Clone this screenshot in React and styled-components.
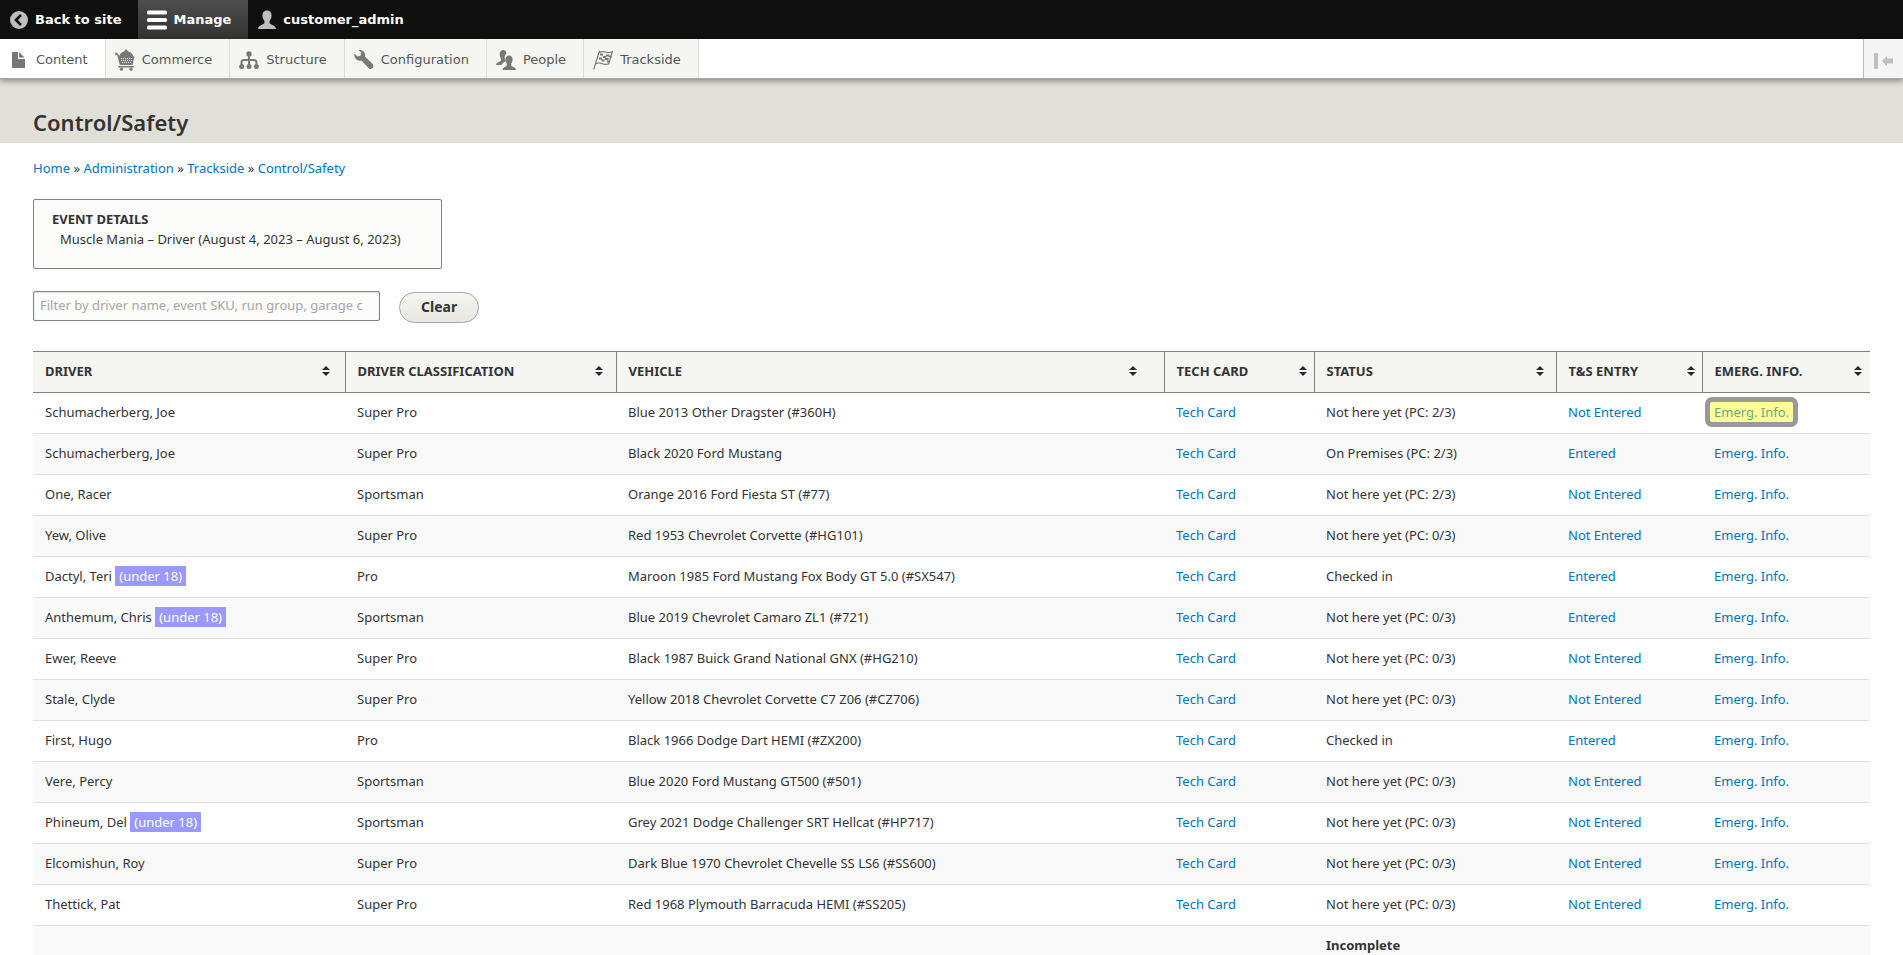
import React from 'react'
import styled, { createGlobalStyle } from 'styled-components'

const GlobalStyle = createGlobalStyle`
	body {
		margin: 0;
		background: #fff;
		color: #333;
		font-family: "Lucida Grande", "Lucida Sans Unicode", "Noto Sans", sans-serif;
		font-size: 13px;
		line-height: 20px;
	}
	a {
		color: #0074bd;
		text-decoration: none;
	}
	main a:hover {
		text-decoration: underline;
	}
`

const Bar = styled.nav`
	display: flex;
	height: 39px;
	background: #0f0f0f;
`
const BarTab = styled.a`
	display: flex;
	align-items: center;
	gap: 6px;
	padding: 0 17px 0 9px;
	color: #fff;
	font-family: Verdana, "DejaVu Sans", sans-serif;
	font-weight: bold;
	background: ${props => props.$active ? 'linear-gradient(#4d4d4d, #333)' : 'none'};
`
const Tray = styled.nav`
	position: relative;
	display: flex;
	height: 39px;
	background: #fff;
	box-shadow: 0 1px 0 #a6a6a4, 0 3px 6px rgba(0, 0, 0, 0.4);
	font-family: Verdana, "DejaVu Sans", sans-serif;
`
const TrayTab = styled.a`
	display: flex;
	align-items: center;
	gap: 7px;
	padding: 2px 17px 0 9px;
	border-right: 1px solid #ddd;
	background: ${props => props.$active ? '#fff' : '#f5f5f2'};
	&& {
		color: #565656;
	}
`
const Toggle = styled.button`
	width: 40px;
	margin-left: auto;
	padding: 8px 0 0;
	border: 0;
	border-left: 1px solid #bfbfbf;
	background: #f5f5f5;
`
const PageHeader = styled.header`
	padding: 30px 33px 7px;
	background: #e0e0d8;
`
const Title = styled.h1`
	margin: 0;
	font-size: 22px;
	font-weight: 600;
	line-height: 28px;
`
const Page = styled.main`
	padding: 15px 33px 0;
`
const Breadcrumb = styled.nav`
	margin-bottom: 21px;
`
const EventBox = styled.section`
	box-sizing: border-box;
	width: fit-content;
	min-width: 409px;
	padding: 9px 18px 19px;
	border: 1px solid #808080;
	border-radius: 2px;
	background: #fcfcfa;
`
const EventTitle = styled.h2`
	margin: 0;
	font-size: 13px;
	line-height: 20px;
	text-transform: uppercase;
`
const EventText = styled.div`
	padding-left: 8px;
`
const Filters = styled.form`
	display: flex;
	align-items: flex-start;
	gap: 19px;
	margin: 22px 0 28px;
`
const FilterInput = styled.input`
	box-sizing: border-box;
	width: 347px;
	height: 30px;
	padding: 2px 6px 4px;
	border: 1px solid #808080;
	border-radius: 2px;
	background: #fcfcfa;
	box-shadow: inset 0 1px 2px rgba(0, 0, 0, 0.125);
	font: inherit;
	&::placeholder {
		color: #a6a6a6;
	}
`
const ClearButton = styled.button`
	height: 31px;
	margin-top: 1px;
	padding: 0 21px 2px;
	border: 1px solid #a6a6a6;
	border-radius: 20px;
	background: linear-gradient(#f6f6f3, #e7e7df);
	color: #333;
	font-family: inherit;
	font-size: 14px;
	font-weight: 700;
`
const Table = styled.table`
	width: 100%;
	border-collapse: collapse;
	table-layout: fixed;
`
const Col = styled.col`
	width: ${props => props.$width};
`
const Th = styled.th`
	height: 38px;
	padding: 0 0 2px 12px;
	border: 1px solid #808080;
	border-width: 1px 0 1px 1px;
	background: #f5f5f2;
	text-align: left;
	text-transform: uppercase;
	&:first-child {
		border-left: 0;
	}
`
const SortLabel = styled.span`
	display: flex;
	align-items: center;
	justify-content: space-between;
	padding-right: 5%;
	white-space: nowrap;
`
const Row = styled.tr`
	border-bottom: 1px solid #e0e0e0;
	&:nth-child(even) {
		background: #f9f9f9;
	}
`
const Td = styled.td`
	height: 38px;
	padding: 0 12px 2px;
	white-space: nowrap;
`
const Minor = styled.span`
	display: inline-block;
	padding: 0 4px;
	background: #9999ff;
	color: #fff;
`
const Focused = styled.a`
	display: inline-block;
	margin: 0 -4px;
	padding: 0 4px;
	border-radius: 2px;
	background: #ffff99;
	&& {
		color: #66ac7b;
	}
	outline: 5px solid #999;
`

const BackIcon = () => (
	<svg width="20" height="20" viewBox="0 0 20 20">
		<circle cx="10" cy="10" r="9" fill="#bebebe" />
		<path d="M12 5l-5 5 5 5" fill="none" stroke="#0f0f0f" strokeWidth="2.6" />
	</svg>
)
const MenuIcon = () => (
	<svg width="20" height="20" viewBox="0 0 20 20" fill="#fff">
		<rect y="0.5" width="20" height="4" rx="1.5" />
		<rect y="8" width="20" height="4" rx="1.5" />
		<rect y="15.5" width="20" height="4" rx="1.5" />
	</svg>
)
const UserIcon = () => (
	<svg width="20" height="20" viewBox="0 0 20 20" fill="#bebebe">
		<path d="M10 .5c3 0 4.600 2 4.600 5 0 2-.7 3.800-2 5.200v2.600c1.200 1.700 6 2 6.400 5.700H1c.4-3.700 5.200-4 6.400-5.700v-2.600c-1.300-1.400-2-3.200-2-5.200 0-3 1.600-5 4.600-5z" />
	</svg>
)
const ContentIcon = () => (
	<svg width="20" height="20" viewBox="0 0 20 20" fill="#787878">
		<path d="M3 2h6v7h7v9H3z" />
		<path d="M10 2v5.500h5.500z" />
	</svg>
)
const CartIcon = () => (
	<svg width="20" height="22" viewBox="0 0 20 22" fill="#787878">
		<path d="M4 8C4.500 5 6.500 3 9 2.500L11 0l2.500 2.500C16 3.500 18 5 18.500 8z" />
		<path d="M1 4.700L3.200 6.500 5.500 15.500" fill="none" stroke="#787878" strokeWidth="1.600" />
		<path d="M3.500 7.500h16l-2 8.500H5.500z" />
		<path d="M6 9.500h12M6 11.500h12M7 13.500h10" stroke="#f5f5f2" strokeWidth="1" strokeDasharray="1 1" />
		<rect x="3" y="17" width="16" height="1.600" rx=".8" />
		<circle cx="1.200" cy="4.800" r="1.200" />
		<circle cx="6.500" cy="20.200" r="1.600" />
		<circle cx="16" cy="20.200" r="1.600" />
	</svg>
)
const StructureIcon = () => (
	<svg width="20" height="20" viewBox="0 0 20 20" fill="#787878">
		<path d="M10 3v14M2.500 16v-3.500q0-2.500 2.500-2.500h10q2.500 0 2.500 2.500V16" fill="none" stroke="#787878" strokeWidth="2" />
		<circle cx="10" cy="4" r="2.700" />
		<circle cx="2.700" cy="16.500" r="2.500" />
		<circle cx="10" cy="16.500" r="2.500" />
		<circle cx="17.300" cy="16.500" r="2.500" />
	</svg>
)
const WrenchIcon = () => (
	<svg width="20" height="20" viewBox="0 0 20 20" fill="#787878">
		<path d="M4.500 0C9 -.5 12 2.800 11 6.500l7.700 7.500c2.200 2.800-1 6.200-3.700 4.400L7.500 10.500C3.500 11.500-.3 8.500.5 3.500L3.500 6.500l3-.7.700-3z" />
	</svg>
)
const PeopleIcon = () => (
	<svg width="20" height="20" viewBox="0 0 20 20" fill="#787878">
		<path d="M7 0c2.300 0 3.500 1.500 3.400 3.500C8.500 5 8 8 9.500 10.500c.3 1.500-3 2-4 4.500H0c.2-3 4.200-3 5-4.500V8.500C3 6 3 0 7 0z" />
		<path d="M13 5.500c4 0 4.500 5 2.200 8.200v1.800c.8 1.500 4.800 1.500 4.800 4.500H6.500c0-3 3.700-3 4.300-4.500v-1.800C8.500 10.500 9 5.500 13 5.500z" />
	</svg>
)
const FlagIcon = () => (
	<svg width="20" height="20" viewBox="0 0 20 20" fill="none" stroke="#787878" strokeWidth="1.200">
		<path d="M.7 19.500L6.500.8M6.500 2.200c4.500-2.500 7 2.200 12.800-.4l-3.600 12c-5.500 2.500-7.500-2.300-12.600-.4" />
		<path d="M7 4.500h3M13 5.500h3M10 7h3M16 6.500h2.500M6 8.500h3M12 9h3.500M8.500 10.500h3M14 11.500h2" strokeWidth="2" />
	</svg>
)
const CollapseIcon = () => (
	<svg width="20" height="16" viewBox="0 0 20 16" fill="#bebebe">
		<rect x="0" y="0" width="4" height="16" rx="1" />
		<path d="M8 8l5-5v2.500h6v5h-6V13z" />
	</svg>
)
const SortIcon = () => (
	<svg width="8" height="10" viewBox="0 0 8 10" fill="#222b2e">
		<path d="M4 0l4 4H0zM0 6h8l-4 4z" />
	</svg>
)

const tabs = [
	{ name: 'Content', icon: ContentIcon },
	{ name: 'Commerce', icon: CartIcon },
	{ name: 'Structure', icon: StructureIcon },
	{ name: 'Configuration', icon: WrenchIcon },
	{ name: 'People', icon: PeopleIcon },
	{ name: 'Trackside', icon: FlagIcon },
]

const columns = [
	{ name: 'Driver', width: '312px' },
	{ name: 'Driver Classification', width: '271px' },
	{ name: 'Vehicle', width: 'auto' },
	{ name: 'Tech Card', width: '150px' },
	{ name: 'Status', width: '242px' },
	{ name: 'T&S Entry', width: '146px' },
	{ name: 'Emerg. Info.', width: '168px' },
]

const drivers = [
	{ name: 'Schumacherberg, Joe', level: 'Super Pro', vehicle: 'Blue 2013 Other Dragster (#360H)', status: 'Not here yet (PC: 2/3)', focused: true },
	{ name: 'Schumacherberg, Joe', level: 'Super Pro', vehicle: 'Black 2020 Ford Mustang', status: 'On Premises (PC: 2/3)', entered: true },
	{ name: 'One, Racer', level: 'Sportsman', vehicle: 'Orange 2016 Ford Fiesta ST (#77)', status: 'Not here yet (PC: 2/3)' },
	{ name: 'Yew, Olive', level: 'Super Pro', vehicle: 'Red 1953 Chevrolet Corvette (#HG101)', status: 'Not here yet (PC: 0/3)' },
	{ name: 'Dactyl, Teri', minor: true, level: 'Pro', vehicle: 'Maroon 1985 Ford Mustang Fox Body GT 5.0 (#SX547)', status: 'Checked in', entered: true },
	{ name: 'Anthemum, Chris', minor: true, level: 'Sportsman', vehicle: 'Blue 2019 Chevrolet Camaro ZL1 (#721)', status: 'Not here yet (PC: 0/3)', entered: true },
	{ name: 'Ewer, Reeve', level: 'Super Pro', vehicle: 'Black 1987 Buick Grand National GNX (#HG210)', status: 'Not here yet (PC: 0/3)' },
	{ name: 'Stale, Clyde', level: 'Super Pro', vehicle: 'Yellow 2018 Chevrolet Corvette C7 Z06 (#CZ706)', status: 'Not here yet (PC: 0/3)' },
	{ name: 'First, Hugo', level: 'Pro', vehicle: 'Black 1966 Dodge Dart HEMI (#ZX200)', status: 'Checked in', entered: true },
	{ name: 'Vere, Percy', level: 'Sportsman', vehicle: 'Blue 2020 Ford Mustang GT500 (#501)', status: 'Not here yet (PC: 0/3)' },
	{ name: 'Phineum, Del', minor: true, level: 'Sportsman', vehicle: 'Grey 2021 Dodge Challenger SRT Hellcat (#HP717)', status: 'Not here yet (PC: 0/3)' },
	{ name: 'Elcomishun, Roy', level: 'Super Pro', vehicle: 'Dark Blue 1970 Chevrolet Chevelle SS LS6 (#SS600)', status: 'Not here yet (PC: 0/3)' },
	{ name: 'Thettick, Pat', level: 'Super Pro', vehicle: 'Red 1968 Plymouth Barracuda HEMI (#SS205)', status: 'Not here yet (PC: 0/3)' },
]

const DriverRow = ({ driver }) => {
	const InfoLink = driver.focused ? Focused : 'a'
	return (
		<Row>
			<Td>{driver.name} {driver.minor && <Minor>(under 18)</Minor>}</Td>
			<Td>{driver.level}</Td>
			<Td>{driver.vehicle}</Td>
			<Td><a href="#tech">Tech Card</a></Td>
			<Td>{driver.status}</Td>
			<Td><a href="#entry">{driver.entered ? 'Entered' : 'Not Entered'}</a></Td>
			<Td><InfoLink href="#info">Emerg. Info.</InfoLink></Td>
		</Row>
	)
}

export default function App() {
	return (
		<>
			<GlobalStyle />
			<Bar>
				<BarTab href="#site"><BackIcon />Back to site</BarTab>
				<BarTab href="#manage" $active><MenuIcon />Manage</BarTab>
				<BarTab href="#user"><UserIcon />customer_admin</BarTab>
			</Bar>
			<Tray>
				{
					tabs.map(({ name, icon: Icon }) => (
						<TrayTab key={name} href="#tab" $active={name === 'Content'}><Icon />{name}</TrayTab>
					))
				}
				<Toggle type="button" aria-label="Vertical orientation"><CollapseIcon /></Toggle>
			</Tray>
			<PageHeader>
				<Title>Control/Safety</Title>
			</PageHeader>
			<Page>
				<Breadcrumb>
					<a href="#home">Home</a> » <a href="#admin">Administration</a> » <a href="#trackside">Trackside</a> » <a href="#control">Control/Safety</a>
				</Breadcrumb>
				<EventBox>
					<EventTitle>Event Details</EventTitle>
					<EventText>Muscle Mania – Driver (August 4, 2023 – August 6, 2023)</EventText>
				</EventBox>
				<Filters>
					<FilterInput type="text" aria-label="Filter drivers" placeholder="Filter by driver name, event SKU, run group, garage c" />
					<ClearButton type="button">Clear</ClearButton>
				</Filters>
				<Table>
					<colgroup>
						{columns.map(col => <Col key={col.name} $width={col.width} />)}
					</colgroup>
					<thead>
						<tr>
							{
								columns.map(col => (
									<Th key={col.name}><SortLabel>{col.name}<SortIcon /></SortLabel></Th>
								))
							}
						</tr>
					</thead>
					<tbody>
						{drivers.map((driver, i) => <DriverRow key={i} driver={driver} />)}
						<Row>
							<Td colSpan={4} />
							<Td><strong>Incomplete</strong></Td>
							<Td colSpan={2} />
						</Row>
					</tbody>
				</Table>
			</Page>
		</>
	)
}
